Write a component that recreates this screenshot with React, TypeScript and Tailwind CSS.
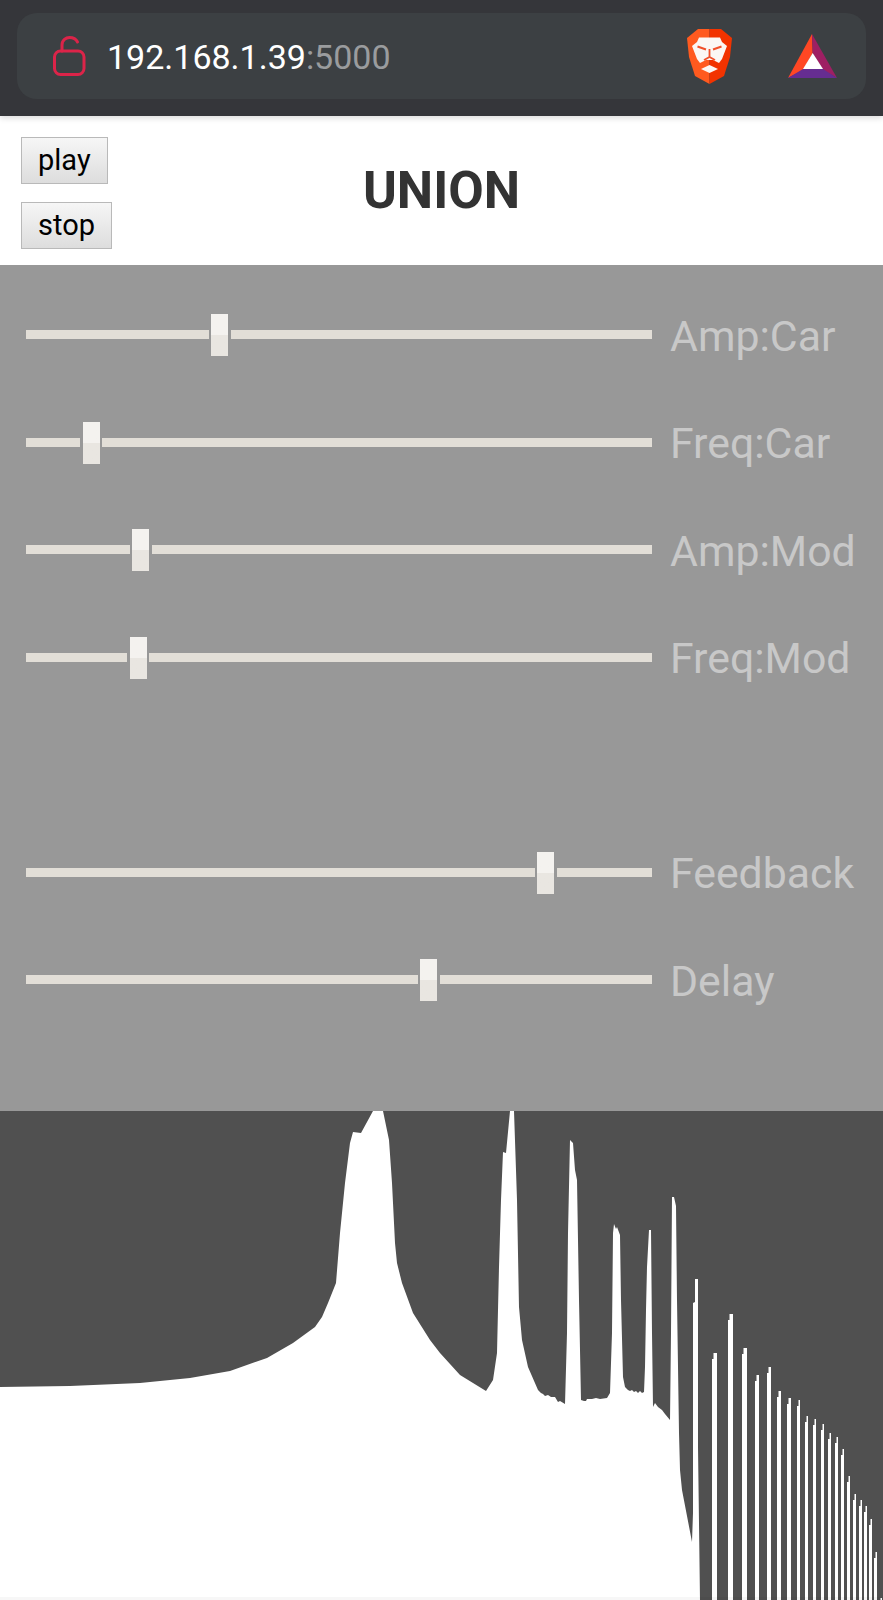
const sliders = [
  { label: 'Amp:Car', pos: 219.5 },
  { label: 'Freq:Car', pos: 91.4 },
  { label: 'Amp:Mod', pos: 140.9 },
  { label: 'Freq:Mod', pos: 138.3 },
  null,
  { label: 'Feedback', pos: 545.6 },
  { label: 'Delay', pos: 428.7 },
];

// outline of the spectrum, in page pixels
const outline = [
  [0, 1387], [70, 1386], [140, 1383], [190, 1378], [230, 1371], [267, 1358], [293, 1343], [315, 1327], [322, 1317], [328, 1303], [336, 1283],
  [340, 1233], [345, 1183], [350, 1143], [353, 1132], [361, 1133], [373, 1111], [383, 1111], [389, 1140], [392, 1183], [395, 1243],
  [397, 1263], [402, 1283], [413, 1313], [430, 1340], [440, 1353], [460, 1375], [486, 1391], [493, 1380], [497, 1353], [499, 1267],
  [501, 1200], [503, 1152], [506, 1153], [510, 1111], [514, 1111], [517, 1200], [519, 1307], [522, 1340], [528, 1367], [538, 1390],
  [541, 1393], [543, 1394], [545, 1396], [548, 1395], [551, 1397], [555, 1397], [558, 1402], [560, 1401], [565, 1404], [567, 1333], [568, 1233], [570, 1140], [573, 1143], [575, 1170], [577, 1180],
  [579, 1300], [581, 1400], [584, 1401], [586, 1401], [587, 1399], [592, 1399], [596, 1398], [600, 1399], [607, 1398], [610, 1393], [612, 1333], [613, 1233], [614, 1224], [616, 1229],
  [617, 1227], [620, 1235], [621, 1300], [623, 1377], [625, 1387], [628, 1390], [630, 1391], [632, 1390], [634, 1392], [636, 1391], [638, 1393], [640, 1391], [642, 1393], [644, 1392],
  [645, 1367], [646, 1310], [647, 1267], [649, 1230], [651, 1230], [652, 1333], [653, 1407], [655, 1403], [658, 1407], [662, 1410], [665, 1414], [670, 1420],
  [671, 1333], [672, 1197], [674, 1197], [676, 1206], [677, 1300], [679, 1433], [680, 1470], [682, 1490], [692, 1542], [693, 1513],
  [693, 1303], [695, 1302], [695, 1279], [698, 1279], [698, 1447], [700, 1600],
];

// comb of narrow peaks on the right: left, right, top
const peaks = [
  [712, 717, 1353], [728, 733, 1314], [742, 747, 1348], [755, 759, 1375], [767, 771, 1367], [777, 781, 1391], [787, 791, 1398],
  [797, 800, 1400], [805, 808, 1416], [813, 816, 1419], [821, 824, 1424], [828, 831, 1433], [835, 838, 1437], [841, 844, 1449],
  [847, 850, 1476], [853, 856, 1494], [859, 862, 1500], [864, 867, 1506], [869, 872, 1519], [874, 877, 1552], [879, 882, 1598],
];

const mainPath = 'M0 1600 L' + outline.map((p) => p.join(' ')).join(' L') + ' Z';
const peakPath = peaks
  .map(([l, r, top]) => `M${l} 1600 V${top + 6} H${l + 1.5} V${top} H${r} V1600 Z`)
  .join(' ');

const font = { fontFamily: 'Roboto, sans-serif' };

function BraveIcon() {
  return (
    <svg width="47" height="55" viewBox="0 0 47 55">
      <path d="M12 0H23.5V55L9 47L3 28L1 9Z" fill="#ff5a1f" />
      <path d="M35 0H23.5V55L38 47L44 28L46 9Z" fill="#f23300" />
      <path d="M13 8.5H34L36 13L41 17L36 30L33 34L27 31H20L14 34L11 30L6 17L11 13Z" fill="#fbf7f4" />
      <path d="M23.5 36L32 40L23.5 44L15 40Z" fill="#fbf7f4" />
      <path d="M11.5 17.5L20 20.5M35.5 17.5L27 20.5" stroke="#f0502a" strokeWidth="2" fill="none" />
      <path d="M23.5 20V28M18 31L23.5 28L29 31" stroke="#f0502a" strokeWidth="1.8" fill="none" />
    </svg>
  );
}

function BatIcon() {
  return (
    <svg width="50" height="46" viewBox="0 0 50 46">
      <path d="M24 1L0 45L15 37L24.7 20Z" fill="#ff4724" />
      <path d="M24 1L49 45L35 37L24.7 20Z" fill="#9e1f63" />
      <path d="M0 45H49L35 36H15Z" fill="#662d91" />
      <path d="M24.7 20L35 36H15Z" fill="#ffffff" />
    </svg>
  );
}

function LockIcon() {
  return (
    <svg width="36" height="42" viewBox="0 0 36 42" fill="none" stroke="#dc2449" strokeWidth="3">
      <rect x="3.5" y="16" width="29.5" height="23.5" rx="6" />
      <path d="M11 16V10C11 5 15 2.5 18.5 2.5C22 2.5 25 4 26.5 7" strokeLinecap="round" />
    </svg>
  );
}

function Slider({ label, pos }: { label: string; pos: number }) {
  return (
    <div className="flex h-[107.5px] items-center pl-[26px]">
      <div className="relative h-[9px] w-[626px] bg-[#e2ded7]">
        <div
          className="absolute top-[-20px] flex h-[49px] w-[22px] -translate-x-1/2 justify-center bg-[#989898] pt-[4px]"
          style={{ left: pos - 26 }}
        >
          <div className="h-[42px] w-[17px] bg-gradient-to-b from-[#f4f2ef] from-50% to-[#e9e6e1] to-50%" />
        </div>
      </div>
      <span className="ml-[18px] mt-[3px] text-[42.8px] leading-none text-[#c8c8c8]" style={font}>
        {label}
      </span>
    </div>
  );
}

export default function App() {
  return (
    <div className="flex h-[1600px] w-[883px] flex-col overflow-hidden bg-white" style={font}>
      {/* Browser address bar */}
      <div className="relative z-10 flex h-[116px] shrink-0 items-start bg-[#35363a] px-[17px] pt-[13px] shadow-[0_2px_6px_rgba(0,0,0,0.15)]">
        <div className="flex h-[86px] w-full items-center rounded-[20px] bg-[#3c4043] pl-[34px]">
          <LockIcon />
          <div className="ml-[20px] mt-[2px] text-[34px] leading-none text-white">
            192.168.1.39<span className="text-[#9a9c9e]">:5000</span>
          </div>
          <div className="ml-auto mr-[28px] flex items-center gap-[55px]">
            <BraveIcon />
            <BatIcon />
          </div>
        </div>
      </div>

      {/* Header */}
      <div className="grid h-[149px] shrink-0 grid-cols-[1fr_auto_1fr] items-center">
        <div className="flex flex-col items-start gap-[18px] self-start pl-[21px] pt-[21px]">
          <button className="h-[47px] border border-[#b9b9b9] bg-gradient-to-b from-[#f6f6f6] to-[#dddddd] px-[16px] text-[29px] leading-none text-black">
            play
          </button>
          <button className="h-[47px] border border-[#b9b9b9] bg-gradient-to-b from-[#f6f6f6] to-[#dddddd] px-[16px] text-[29px] leading-none text-black">
            stop
          </button>
        </div>
        <h1 className="text-[51.5px] font-bold leading-none text-[#333333]">UNION</h1>
        <div />
      </div>

      {/* Sliders */}
      <div className="h-[846px] shrink-0 bg-[#989898] pt-[16px]">
        {sliders.map((s, i) =>
          s ? <Slider key={i} label={s.label} pos={s.pos} /> : <div key={i} className="h-[107.5px]" />
        )}
      </div>

      {/* Spectrum */}
      <svg className="block h-[489px] w-[883px] shrink-0 bg-[#505050]" viewBox="0 1111 883 489">
        <path d={mainPath} fill="#ffffff" />
        <path d={peakPath} fill="#ffffff" />
        <rect x="0" y="1597" width="883" height="3" fill="#000000" opacity="0.03" />
      </svg>
    </div>
  );
}
